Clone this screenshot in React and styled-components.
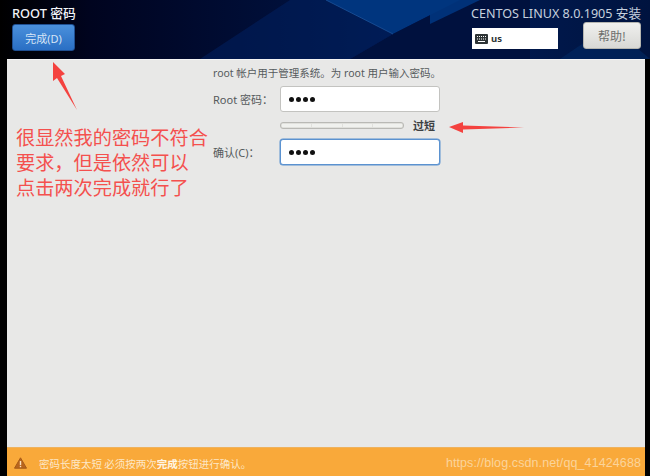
import styled, { createGlobalStyle } from "styled-components";

const GlobalStyle = createGlobalStyle`
  html, body {
    margin: 0;
    padding: 0;
    background: #000;
  }
  body {
    font-family: "Liberation Sans", "Noto Sans CJK SC", sans-serif;
  }
`

const Screen = styled.div`
  position: relative;
  width: 650px;
  height: 476px;
  padding: 0 5px 0 7px;
  box-sizing: border-box;
  display: flex;
  flex-direction: column;
  background: #000;
  overflow: hidden;
`
const Header = styled.header`
  position: relative;
  height: 59px;
  flex: none;
  margin: 0 -5px 0 -7px;
  padding: 5px 9px 0 12px;
  box-sizing: border-box;
  display: flex;
  justify-content: space-between;
  background: linear-gradient(90deg, #000 0%, #00041f 14%, #000a2e 30%, #00123f 50%, #001c55 70%, #00133f 100%);
  overflow: hidden;
`
const HeaderArt = styled.svg`
  position: absolute;
  left: 0;
  top: 0;
`
const HeaderLeft = styled.div`
  position: relative;
  display: flex;
  flex-direction: column;
  gap: 2px;
`
const HeaderRight = styled.div`
  position: relative;
  display: flex;
  flex-direction: column;
  align-items: flex-end;
`
const SpokeTitle = styled.h1`
  margin: 0;
  font-family: "Noto Sans", "Noto Sans CJK SC", sans-serif;
  font-size: 12.8px;
  line-height: 17px;
  font-weight: 500;
  color: #f2f4f8;
`
const DoneButton = styled.button`
  width: 63px;
  height: 27px;
  padding: 0;
  border: 1px solid #1f4f92;
  border-radius: 3px;
  background: linear-gradient(#4a90dc, #2a6fc4);
  color: #d6e5f6;
  font-family: "Noto Sans", "Noto Sans CJK SC", sans-serif;
  font-size: 11px;
`
const ProductTitle = styled.div`
  font-family: "Noto Sans", "Noto Sans CJK SC", sans-serif;
  font-size: 12.6px;
  line-height: 17px;
  color: #c6d0de;
`
const HeaderControls = styled.div`
  display: flex;
  align-items: flex-start;
  gap: 25px;
`
const Keyboard = styled.div`
  width: 86px;
  height: 21px;
  margin-top: 6px;
  padding-left: 3px;
  box-sizing: border-box;
  display: flex;
  align-items: center;
  gap: 3px;
  background: #fff;
  color: #2e3436;
  font-family: "Noto Sans", sans-serif;
  font-size: 9.5px;
  font-weight: 700;
`
const HelpButton = styled.button`
  width: 58px;
  height: 27px;
  padding: 0;
  border: 1px solid #b5b5b0;
  border-radius: 3px;
  background: linear-gradient(#f0f0ee, #d8d8d5);
  color: #6d6f6c;
  font-family: "Noto Sans CJK SC", sans-serif;
  font-size: 12px;
`
const Content = styled.main`
  flex: 1;
  position: relative;
  background: #e8e8e7;
  border-top: 1px solid #f4f4f4;
  padding: 6px 0 0 206px;
`
const Intro = styled.p`
  margin: 0 0 6px;
  font-family: "Noto Sans", "Noto Sans CJK SC", sans-serif;
  font-size: 10.5px;
  line-height: 14px;
  color: #555a5c;
`
const FormGrid = styled.div`
  display: grid;
  grid-template-columns: 67px 160px 60px;
  align-items: center;
  row-gap: 10px;
`
const FieldLabel = styled.label`
  font-family: "Noto Sans", "Noto Sans CJK SC", sans-serif;
  font-size: 11px;
  color: #555a5c;
`
const PasswordBox = styled.div`
  height: 26px;
  box-sizing: border-box;
  padding-left: 8px;
  display: flex;
  align-items: center;
  gap: 2px;
  border-radius: 3px;
  background: #fff;
  border: ${(p) => (p.$focused ? "1px solid #5b92d0" : "1px solid #c3c3c0")};
  box-shadow: ${(p) => (p.$focused ? "0 0 0 0.5px #5b92d0" : "none")};
`
const Dot = styled.span`
  width: 5px;
  height: 5px;
  border-radius: 50%;
  background: #111;
`
const Meter = styled.div`
  height: 7px;
  box-sizing: border-box;
  display: grid;
  grid-template-columns: repeat(4, 1fr);
  gap: 1px;
  width: 124px;
  padding: 1px;
  border: 1px solid #b9b9b5;
  border-radius: 3px;
  background: #e0e0dc;
`
const MeterCell = styled.span`
  background: #f0f1ee;
`
const Strength = styled.span`
  margin-left: -27px;
  grid-column: 3;
  font-family: "Noto Sans CJK SC", sans-serif;
  font-size: 11px;
  line-height: 7px;
  font-weight: 700;
  color: #3c4042;
`
const Annotation = styled.div`
  position: absolute;
  left: 9px;
  top: 66px;
  font-family: "Liberation Sans", "Noto Sans CJK SC", sans-serif;
  font-size: 19.2px;
  line-height: 25px;
  white-space: nowrap;
  color: #f4504e;
`
const ArrowLayer = styled.svg`
  position: absolute;
  left: 0;
  top: 0;
  pointer-events: none;
`
const Footer = styled.footer`
  height: 29px;
  flex: none;
  box-sizing: border-box;
  padding: 2px 4px 0 7px;
  display: flex;
  align-items: center;
  background: #f9a93a;
  border-top: 1px solid #eeb25e;
`
const FooterMessage = styled.span`
  margin-left: 12px;
  font-family: "Noto Sans CJK SC", sans-serif;
  font-size: 10.5px;
  color: #fde7c6;
`
const Strong = styled.b`
  color: #fff5e4;
`
const Watermark = styled.span`
  margin-left: auto;
  font-family: "Liberation Sans", sans-serif;
  font-size: 12.5px;
  letter-spacing: 0.1px;
  color: #fbd49a;
`

function KeyboardIcon() {
  return (
    <svg width="13" height="10" viewBox="0 0 13 10">
      <rect width="13" height="10" rx="1" fill="#2e3436" />
      <path d="M2 2.5h9M2 5h9" stroke="#fff" strokeWidth="1" strokeDasharray="1 1" />
      <path d="M3 7.5h7" stroke="#fff" strokeWidth="1" />
    </svg>
  )
}

function WarningIcon() {
  return (
    <svg width="13" height="12" viewBox="0 0 13 12">
      <path d="M6.5 0.8 L12.5 11.2 L0.5 11.2 Z" fill="#b9651d" stroke="#a65a18" strokeLinejoin="round" />
      <rect x="5.8" y="4" width="1.4" height="4" fill="#fbe3c0" />
      <rect x="5.8" y="8.8" width="1.4" height="1.4" fill="#fbe3c0" />
    </svg>
  )
}

export default function App() {
  return (
    <>
      <GlobalStyle />
      <Screen>
        <Header>
          <HeaderArt width="650" height="59" viewBox="0 0 650 59">
            <polygon points="326,0 393,34 460,0" fill="#00357e" />
            <polygon points="393,34 390,59 350,59" fill="#00215f" />
            <polygon points="393,34 460,0 530,0 530,59 350,59" fill="#00113e" />
            <polygon points="200,59 290,0 326,0 393,34 350,59" fill="#002060" opacity="0.55" />
            <polygon points="430,0 480,0 430,24" fill="#00357e" opacity="0.9" />
            <polygon points="560,59 610,25 650,59" fill="#00265f" opacity="0.7" />
            <line x1="326" y1="0" x2="393" y2="34" stroke="#1c559e" strokeWidth="0.8" />
          </HeaderArt>
          <HeaderLeft>
            <SpokeTitle>ROOT 密码</SpokeTitle>
            <DoneButton>完成(D)</DoneButton>
          </HeaderLeft>
          <HeaderRight>
            <ProductTitle>CENTOS LINUX 8.0.1905 安装</ProductTitle>
            <HeaderControls>
              <Keyboard>
                <KeyboardIcon />
                us
              </Keyboard>
              <HelpButton>帮助!</HelpButton>
            </HeaderControls>
          </HeaderRight>
        </Header>
        <Content>
          <Intro>root 帐户用于管理系统。为 root 用户输入密码。</Intro>
          <FormGrid>
            <FieldLabel>Root 密码：</FieldLabel>
            <PasswordBox>
              <Dot /><Dot /><Dot /><Dot />
            </PasswordBox>
            <span />
            <span />
            <Meter>
              <MeterCell /><MeterCell /><MeterCell /><MeterCell />
            </Meter>
            <Strength>过短</Strength>
            <FieldLabel>确认(C)：</FieldLabel>
            <PasswordBox $focused>
              <Dot /><Dot /><Dot /><Dot />
            </PasswordBox>
          </FormGrid>
          <Annotation>
            很显然我的密码不符合<br />
            要求，但是依然可以<br />
            点击两次完成就行了
          </Annotation>
        </Content>
        <Footer>
          <WarningIcon />
          <FooterMessage>
            密码长度太短 必须按两次<Strong>完成</Strong>按钮进行确认。
          </FooterMessage>
          <Watermark>https://blog.csdn.net/qq_41424688</Watermark>
        </Footer>
        <ArrowLayer width="650" height="476" viewBox="0 0 650 476">
          <polygon points="53,62 65,74 61,76 77,110 57,78 53,81" fill="#f4423f" />
          <polygon points="449,127 463,122 463,125.5 524,127.5 463,129.5 463,133" fill="#f4423f" />
        </ArrowLayer>
      </Screen>
    </>
  )
}
